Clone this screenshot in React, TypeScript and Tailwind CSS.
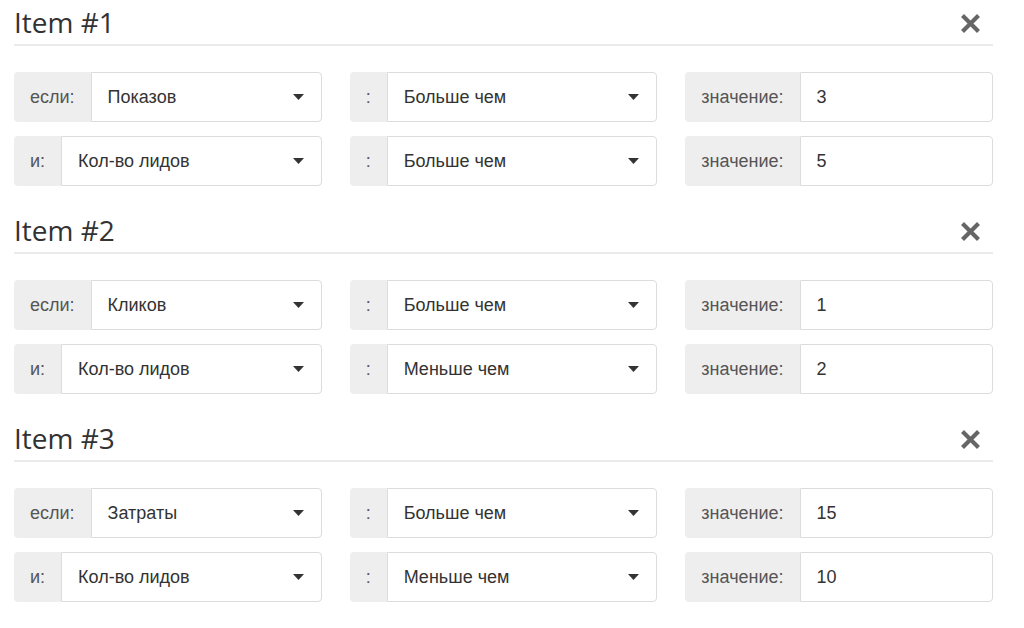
import React from "react";

type Row = { label: string; field: string; op: string; value: string };
type Item = { title: string; rows: Row[] };

const items: Item[] = [
  {
    title: "Item #1",
    rows: [
      { label: "если:", field: "Показов", op: "Больше чем", value: "3" },
      { label: "и:", field: "Кол-во лидов", op: "Больше чем", value: "5" },
    ],
  },
  {
    title: "Item #2",
    rows: [
      { label: "если:", field: "Кликов", op: "Больше чем", value: "1" },
      { label: "и:", field: "Кол-во лидов", op: "Меньше чем", value: "2" },
    ],
  },
  {
    title: "Item #3",
    rows: [
      { label: "если:", field: "Затраты", op: "Больше чем", value: "15" },
      { label: "и:", field: "Кол-во лидов", op: "Меньше чем", value: "10" },
    ],
  },
];

const Caret = () => (
  <svg width="11" height="6" viewBox="0 0 11 6" className="shrink-0">
    <path d="M0 0h11L5.5 6z" fill="#333" />
  </svg>
);

const Addon = ({ children }: { children: React.ReactNode }) => (
  <span className="flex shrink-0 items-center rounded-l-[4px] bg-[#eeeeee] px-[16px] text-[18px] text-[#555]">
    {children}
  </span>
);

const SelectGroup = ({ label, value }: { label: string; value: string }) => (
  <div className="flex h-[50px]">
    <Addon>{label}</Addon>
    <div className="flex flex-1 items-center justify-between rounded-r-[4px] border border-[#dcdcdc] bg-white pl-4 pr-[17px] text-[18px] text-[#333]">
      <span>{value}</span>
      <Caret />
    </div>
  </div>
);

const ValueGroup = ({ value }: { value: string }) => (
  <div className="flex h-[50px]">
    <Addon>значение:</Addon>
    <div className="flex flex-1 items-center rounded-r-[4px] border border-[#dcdcdc] bg-white px-4 text-[18px] text-[#333]">
      {value}
    </div>
  </div>
);

const ItemBlock = ({ item }: { item: Item }) => (
  <section className="pb-[22px]">
    <div className="flex items-center justify-between border-b-2 border-[#ebebeb] pt-[4px] pb-[4px]">
      <h2 className="text-[28px] leading-[36px] text-[#333] [font-family:'Open_Sans',sans-serif]">
        {item.title}
      </h2>
      <button className="mr-[13px] mt-[2px] text-[#666]">
        <svg width="19" height="19" viewBox="0 0 19 19">
          <path d="M3 3l13 13M16 3L3 16" stroke="#666" strokeWidth="4.2" strokeLinecap="square" />
        </svg>
      </button>
    </div>
    <div className="mt-[26px] flex flex-col gap-[14px]">
      {item.rows.map((r, i) => (
        <div key={i} className="grid grid-cols-3 gap-[28px]">
          <SelectGroup label={r.label} value={r.field} />
          <SelectGroup label=":" value={r.op} />
          <ValueGroup value={r.value} />
        </div>
      ))}
    </div>
  </section>
);

export default function App() {
  return (
    <div className="min-h-screen w-[1007px] bg-white px-[14px] [font-family:'Liberation_Sans',Arial,sans-serif]">
      {items.map((it) => (
        <ItemBlock key={it.title} item={it} />
      ))}
    </div>
  );
}
